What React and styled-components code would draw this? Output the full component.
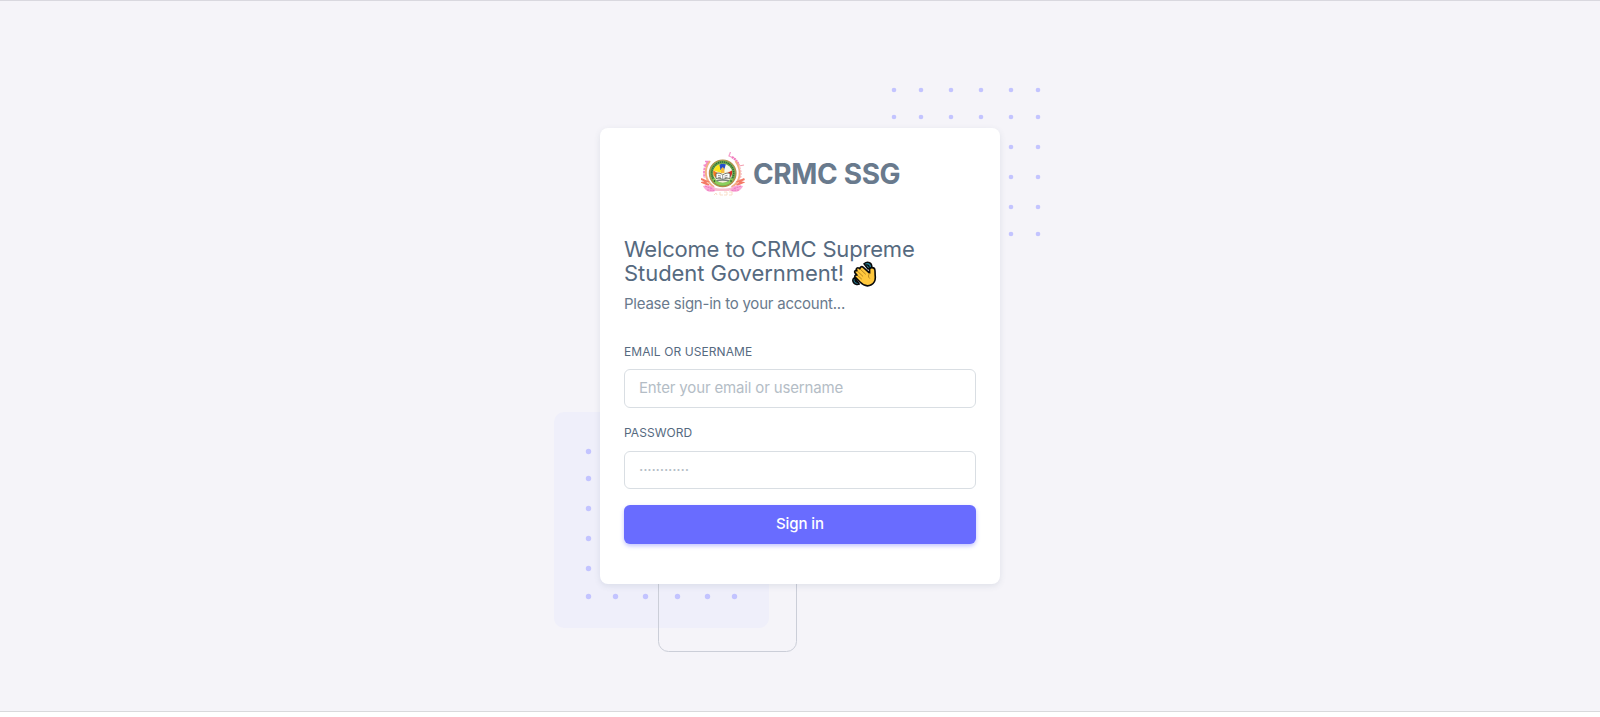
import React from "react";
import styled, { createGlobalStyle } from "styled-components";

const GlobalStyle = createGlobalStyle`
  *, *::before, *::after { box-sizing: border-box; }
  body { margin: 0; background: #fff; font-family: Inter, "Liberation Sans", sans-serif; }
`;

const Page = styled.main`
  display: flex;
  justify-content: center;
  align-items: center;
  height: 712px;
  background: #f5f4f9;
  border-top: 1px solid #d9d8df;
  border-bottom: 1px solid #d9d9dc;
`;

const CardArea = styled.div`
  position: relative;
  width: 400px;
`;

const Decoration = styled.svg`
  position: absolute;
  left: ${(p) => p.$left}px;
  top: ${(p) => p.$top}px;
`;

const Card = styled.section`
  position: relative;
  height: 456px;
  padding: 24px;
  border-radius: 8px;
  background: #fff;
  box-shadow: 0 2px 6px rgba(67, 89, 113, 0.12);
`;

const Brand = styled.div`
  display: flex;
  align-items: center;
  padding-left: 77px;
  height: 44px;
`;

const BrandName = styled.span`
  margin-left: 8px;
  padding-bottom: 1px;
  color: #697a8d;
  font-size: 28px;
  line-height: 34px;
  font-weight: 700;
  letter-spacing: -0.37px;
  white-space: nowrap;
`;

const Title = styled.h1`
  margin: 41px 0 0;
  color: #566a7f;
  font-size: 22px;
  line-height: 24px;
  font-weight: 400;
  white-space: nowrap;
`;

const Line = styled.span`
  display: flex;
  height: 24px;
  letter-spacing: ${(p) => p.$spacing}px;
`;

const Wave = styled.svg`
  margin: 0 0 0 8px;
  flex: none;
`;

const Subtitle = styled.p`
  margin: 7px 0 0;
  color: #697a8d;
  font-size: 15px;
  line-height: 23px;
  letter-spacing: -0.23px;
`;

const Form = styled.form`
  display: flex;
  flex-direction: column;
  margin-top: 28px;
`;

const Field = styled.div`
  display: flex;
  flex-direction: column;
  gap: ${(p) => p.$labelGap}px;
  margin-bottom: 16px;
`;

const Label = styled.label`
  height: 18px;
  color: #566a7f;
  font-size: 12px;
  line-height: 17px;
  letter-spacing: ${(p) => p.$spacing}px;
  text-transform: uppercase;
`;

const Input = styled.input`
  width: 100%;
  height: ${(p) => p.$height}px;
  padding: 0 14px 2px;
  border: 1px solid #d9dee3;
  border-radius: 6px;
  outline: none;
  background: #fff;
  color: #697a8d;
  font: 400 15px Inter, "Liberation Sans", sans-serif;
  letter-spacing: ${(p) => p.$spacing}px;
  &::placeholder { color: #b4bdc6; opacity: 1; }
`;

const Submit = styled.button`
  height: 39px;
  padding: 0 0 2px;
  border: 0;
  border-radius: 6px;
  background: #696cff;
  color: #fff;
  font: 500 15px Inter, "Liberation Sans", sans-serif;
  letter-spacing: -0.08px;
  box-shadow: 0 2px 4px rgba(105, 108, 255, 0.4);
`;

function Dots({ xs, ys, r }) {
  return ys.map((y) => xs.map((x) => <circle key={`${x}-${y}`} cx={x} cy={y} r={r} fill="#c3c4ff" />));
}

function Crest() {
  return (
    <svg width="44" height="44" viewBox="0 0 44 44" fill="none">
      <path d="M7 10C3 14 2.500 20 3.500 26" stroke="#f48acb" strokeWidth="2" strokeDasharray="2.500 .8" />
      <path d="M4 9.500h4M2.500 13.500l4-1" stroke="#f48acb" strokeWidth="1.700" />
      <path d="M29.500 0L28 4l3.500 1.500" stroke="#f6a0cc" strokeWidth="1.300" />
      <path d="M31 5l4 3 3 5" stroke="#f079bd" strokeWidth="2.200" strokeDasharray="2 .5" />
      <path d="M38 14l5-1" stroke="#f3a1b1" strokeWidth="1.200" />
      <path d="M9 9C2 18 4 29 13 35M34.500 9c7 10 5 21-4 26" stroke="#f3b084" strokeWidth="2" />
      <path d="M38.500 15c2 5 2 9 0 13" stroke="#f7b9bf" strokeWidth="1.400" strokeDasharray="2 1" />
      <path d="M0 27l6 2.500-4 1 6 2.500M43.500 27l-6 2.500 4 1-6 2.500" stroke="#f47a66" strokeWidth="1.900" />
      <path d="M2 34c6-2 11 0 14 4-6 4-12 1-14-4zM42 34c-6-2-11 0-14 4 6 4 12 1 14-4z" fill="#f9a9d7" />
      <path d="M4 34l8 3m-6 1l8 .5M40 34l-8 3m6 1l-8 .5" stroke="#ef7fc2" strokeWidth="1.200" strokeDasharray="2 .7" />
      <path d="M12 35c5 2 14 2 20 0l-4 4H15z" fill="#f8c0cf" />
      <path d="M13 43l2-2 1 2m3-3v3h3m1-3h3v3h-3m5-3h3v3h-3" stroke="#f9dfc9" />
      <circle cx="21.700" cy="21.300" r="13.300" fill="#72ad50" stroke="#b18b4a" strokeWidth="1.200" />
      <path d="M12.500 27a11 11 0 0018.500 0" stroke="#8bd05c" strokeWidth="2.500" />
      <path d="M12.200 26.500A11 11 0 1131.200 26.500" stroke="#326b3a" strokeWidth="1.500" strokeDasharray="1.300 .7" />
      <circle cx="21.700" cy="21.300" r="9.500" fill="#f6f1dc" />
      <path d="M21.700 21.300L12.500 18.500a9.500 9.500 0 016-6.300z" fill="#fce51c" />
      <path d="M18.500 12.400a9.500 9.500 0 016.400 0l-.9 5.600h-4.500z" fill="#244dcc" />
      <path d="M21.700 21.300L25 12.700a9.500 9.500 0 015.500 5z" fill="#f5faf1" />
      <path d="M12.400 18.500l5.400 3-2 4.500c-3-1-4.200-4-3.400-7.500z" fill="#f47b22" />
      <path d="M30.900 18.500l-5.500 3 2 4.500c3-1 4.200-4 3.500-7.500z" fill="#d92b25" />
      <path d="M20 17l1.700-2 1.700 2v4H20z" fill="#f6b83e" />
      <path d="M15 21.500c3-1 5 0 6.700 1.400 2.300-1.400 4.300-2.400 7.300-1.400v5c-3-.7-5 0-7.300 1-1.700-1-3.700-1.700-6.700-1z" fill="#fff" stroke="#59604f" strokeWidth=".8" />
      <path d="M21.700 23.200v4M17 23.300l3 .8m3.500 0l3-.8M17 25.200l3 .6m3.500 0l3-.6" stroke="#666" strokeWidth=".7" />
      <path d="M15.500 28.700c4-1 8-1 12.400 0" stroke="#78847e" strokeWidth="1.600" />
      <circle cx="13.500" cy="29" r=".8" fill="#173c1d" />
      <circle cx="30" cy="29" r=".8" fill="#173c1d" />
    </svg>
  );
}

function WavingHand() {
  return (
    <Wave width="25" height="26" viewBox="0 0 25 26" fill="none" strokeLinecap="round" strokeLinejoin="round">
      <path d="M12 2.800c2-1.800 4-1.900 5.500-1.100 1.700.8 2.500 2.600 2.300 5L16 8z" fill="#257f96" stroke="#08090a" strokeWidth="1.500" />
      <path d="M14 4c1.800-.3 3 .7 3.300 2.300" stroke="#08090a" strokeWidth="1.200" />
      <path d="M2.500 16.500c-1.700 1.200-2 3.300-1 5 1 1.700 3.600 2.500 5.800 1.600z" fill="#257f96" stroke="#08090a" strokeWidth="1.500" />
      <path d="M3 18.500c0 1.600 1.200 2.700 3 2.900" stroke="#08090a" strokeWidth="1.200" />
      <path d="M8 21L3.200 16.100c-1-1.300.5-2.900 1.900-1.900L3 11.900C2 10.300 3.600 8.800 5 9.800L4.500 9C3.800 7.300 5.600 6.100 7 7.200l1 .7C7.600 6.200 9.600 5 11 6.200l6.600 5.900V8.800c0-3 5-2.800 5.300.2.300 2 .1 3.400.3 5.600.5 4-1 7.600-3.900 9.200-3.700 2-7.800.8-11.300-2.800z" fill="#ffc83d" stroke="#08090a" strokeWidth="1.600" />
      <path d="M5.800 10.500l5 4.700M8.800 8.700l4.700 4.400M6 14.900l3.500 3M17.800 12.300c-1.700 1.800-1.900 3.500-.3 5" stroke="#b88721" strokeWidth="1" />
    </Wave>
  );
}

export default function App() {
  return (
    <>
      <GlobalStyle />
      <Page>
        <CardArea>
          <Decoration $left={290} $top={-42} width="152" height="152">
            <Dots xs={[4, 31, 61, 91, 121, 148]} ys={[4, 31, 61, 91, 121, 148]} r={2.3} />
          </Decoration>
          <Decoration $left={-46} $top={284} width="244" height="241">
            <rect width="215" height="216" rx="10" fill="#efeffa" />
            <Dots xs={[34.5, 61.5, 91.5, 123.5, 153.5, 180.5]} ys={[39.5, 66.5, 96.5, 126.5, 156.5, 184.5]} r={2.7} />
            <rect x="104.500" y="101.500" width="138" height="138" rx="10" fill="none" stroke="#cbced8" />
          </Decoration>
          <Card>
            <Brand>
              <Crest />
              <BrandName>CRMC SSG</BrandName>
            </Brand>
            <Title>
              <Line $spacing={-0.19}>Welcome to CRMC Supreme</Line>
              <Line $spacing={-0.06}>Student Government!<WavingHand /></Line>
            </Title>
            <Subtitle>Please sign-in to your account...</Subtitle>
            <Form onSubmit={(e) => e.preventDefault()}>
              <Field $labelGap={8}>
                <Label htmlFor="email" $spacing={0.08}>Email or Username</Label>
                <Input id="email" $height={39} $spacing={-0.15} placeholder="Enter your email or username" />
              </Field>
              <Field $labelGap={9}>
                <Label htmlFor="password" $spacing={0.05}>Password</Label>
                <Input id="password" type="password" $height={38} $spacing={-0.17} placeholder="············" />
              </Field>
              <Submit type="submit">Sign in</Submit>
            </Form>
          </Card>
        </CardArea>
      </Page>
    </>
  );
}
